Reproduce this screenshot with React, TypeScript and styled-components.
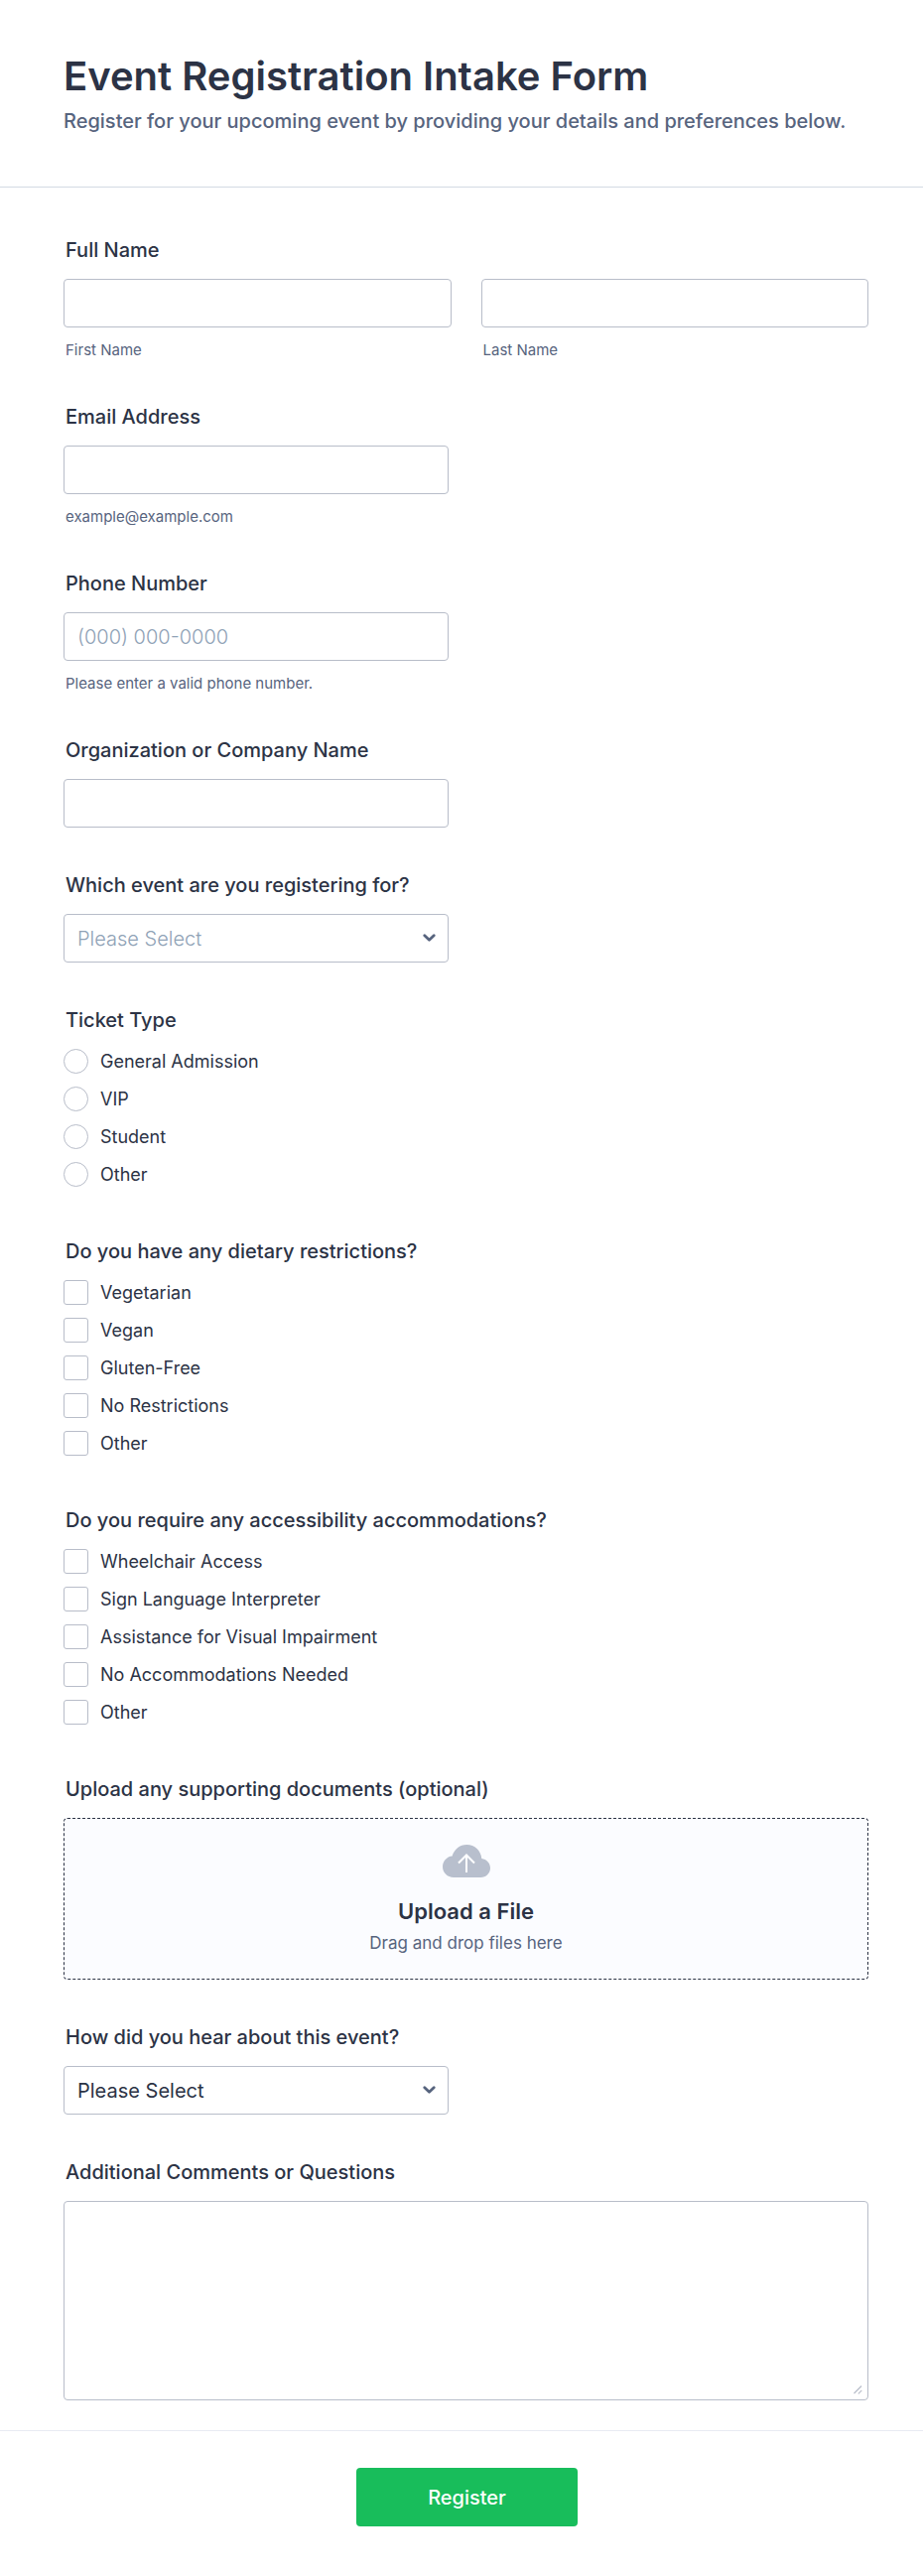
import React, { useId, useState } from "react";
import styled, { createGlobalStyle } from "styled-components";

const color = {
  ink: "#2c3345",
  muted: "#57647e",
  placeholder: "#8fa2b6",
  border: "#b8bdc9",
  green: "#18bd5b",
};

const GlobalStyle = createGlobalStyle`
  *, *::before, *::after { box-sizing: border-box; }
  body {
    margin: 0;
    background: #fff;
    color: ${color.ink};
    font-family: Inter, "Liberation Sans", sans-serif;
  }
  input, select, textarea, button { font: inherit; color: inherit; }
`;

const Form = styled.form`
  width: 100%;
`;

const Header = styled.header`
  padding: 52px 64px 54px;
  border-bottom: 1px solid #d3dae3;
`;

const Title = styled.h1`
  margin: 0;
  font-size: 40px;
  line-height: 50px;
  font-weight: 600;
`;

const Subtitle = styled.p`
  margin: 8px 0 0;
  font-size: 20px;
  line-height: 24px;
  font-weight: 500;
  color: ${color.muted};
`;

const Fields = styled.div`
  display: flex;
  flex-direction: column;
  gap: 45px;
  padding: 50px 55px 30px 64px;
`;

const FieldBox = styled.div`
  display: flex;
  flex-direction: column;
`;

const GroupBox = styled.fieldset`
  min-width: 0;
  margin: 0;
  padding: 0;
  border: 0;
`;

const Label = styled.label`
  display: block;
  margin-bottom: 16px;
  padding: 0 2px;
  font-size: 20px;
  line-height: 26px;
  font-weight: 500;
`;

const SubLabel = styled.label`
  margin-top: 14px;
  padding: 0 2px;
  font-size: 15px;
  line-height: 18px;
  color: ${color.muted};
`;

const Columns = styled.div`
  display: grid;
  grid-template-columns: 1fr 1fr;
  gap: 30px;
`;

const TextInput = styled.input<{ $half?: boolean }>`
  width: 100%;
  max-width: ${(p) => (p.$half ? "388px" : "none")};
  height: 49px;
  padding: 0 13px;
  border: 1px solid ${color.border};
  border-radius: 4px;
  background: #fff;
  font-size: 20px;
  &::placeholder {
    color: ${color.placeholder};
    font-weight: 300;
    opacity: 1;
  }
`;

const SelectBox = styled.div`
  display: grid;
  align-items: center;
  width: 100%;
  max-width: 388px;
  > * { grid-area: 1 / 1; }
  > svg {
    justify-self: end;
    margin-right: 13px;
    pointer-events: none;
  }
`;

const Select = styled.select<{ $muted?: boolean }>`
  appearance: none;
  width: 100%;
  height: 49px;
  padding: 0 40px 0 13px;
  border: 1px solid ${color.border};
  border-radius: 4px;
  background: #fff;
  font-size: 20px;
  font-weight: ${(p) => (p.$muted ? 300 : 400)};
  color: ${(p) => (p.$muted ? color.placeholder : color.ink)};
`;

const Options = styled.div`
  display: flex;
  flex-direction: column;
  align-items: flex-start;
  gap: 13px;
  padding-bottom: 7px;
`;

const Option = styled.label`
  display: flex;
  align-items: center;
  gap: 12px;
  font-size: 18px;
  line-height: 25px;
`;

const Tick = styled.input`
  appearance: none;
  width: 25px;
  height: 25px;
  margin: 0;
  border: 1px solid ${color.border};
  border-radius: ${(p) => (p.type === "radio" ? "50%" : "3px")};
  background: #fff;
  &:checked {
    background: ${color.green};
    box-shadow: inset 0 0 0 5px #fff;
  }
`;

const Upload = styled.button`
  display: flex;
  flex-direction: column;
  align-items: center;
  width: 100%;
  padding: 26px 16px 25px;
  border: 1px dashed ${color.ink};
  border-radius: 4px;
  background: #fbfcff;
  cursor: pointer;
`;

const UploadTitle = styled.span`
  margin-top: 21px;
  font-size: 22px;
  line-height: 26px;
  font-weight: 600;
`;

const UploadHint = styled.span`
  margin-top: 8px;
  font-size: 17px;
  line-height: 22px;
  color: ${color.muted};
`;

const CommentsBox = styled.div`
  display: grid;
  > * { grid-area: 1 / 1; }
  > svg {
    place-self: end;
    margin: 0 6px 6px 0;
    pointer-events: none;
  }
`;

const Comments = styled.textarea`
  display: block;
  width: 100%;
  height: 201px;
  padding: 8px 13px;
  border: 1px solid ${color.border};
  border-radius: 4px;
  background: #fff;
  font-size: 20px;
  resize: vertical;
  &::-webkit-resizer { background: transparent; }
`;

const Footer = styled.footer`
  display: flex;
  justify-content: center;
  padding: 37px 53px 50px 64px;
  border-top: 1px solid #e8ebf2;
`;

const Submit = styled.button`
  min-width: 223px;
  height: 59px;
  padding: 0 32px;
  border: 0;
  border-radius: 4px;
  background: ${color.green};
  color: #fff;
  font-size: 20px;
  font-weight: 500;
  cursor: pointer;
`;

function TextField(props: { label: string; type?: string; hint?: string; placeholder?: string }) {
  const id = useId();
  return (
    <FieldBox>
      <Label htmlFor={id}>{props.label}</Label>
      <TextInput $half id={id} type={props.type ?? "text"} placeholder={props.placeholder} />
      {props.hint && <SubLabel htmlFor={id}>{props.hint}</SubLabel>}
    </FieldBox>
  );
}

function SelectField(props: { label: string; muted?: boolean }) {
  const id = useId();
  return (
    <FieldBox>
      <Label htmlFor={id}>{props.label}</Label>
      <SelectBox>
        <Select id={id} $muted={props.muted}>
          <option>Please Select</option>
        </Select>
        <svg width="13" height="9" viewBox="0 0 13 9" fill="none" aria-hidden="true">
          <path
            d="M1.8 1.8 6.5 6.3 11.2 1.8"
            stroke={color.muted}
            strokeWidth="2.8"
            strokeLinecap="round"
            strokeLinejoin="round"
          />
        </svg>
      </SelectBox>
    </FieldBox>
  );
}

function ChoiceField(props: { label: string; type: "radio" | "checkbox"; options: string[] }) {
  const name = useId();
  return (
    <GroupBox>
      <Label as="legend">{props.label}</Label>
      <Options>
        {props.options.map((option) => (
          <Option key={option}>
            <Tick type={props.type} name={name} value={option} />
            {option}
          </Option>
        ))}
      </Options>
    </GroupBox>
  );
}

function CloudIcon() {
  return (
    <svg width="48" height="33" viewBox="0 0 48 33" fill="none" aria-hidden="true">
      <path
        d="M11 33C4.900 33 0 28.300 0 22.300 0 16.600 4.200 12 9.600 11.500 11.500 4.800 17.200 0 24.300 0 32.400 0 38.600 6 39.300 14 44.300 14.600 48 18.600 48 23.500 48 28.800 43.700 33 38.400 33Z"
        fill="#b8bfcd"
      />
      <path d="M24 28V11M16 18.500 24 10.500 32 18.500" stroke="#fff" strokeWidth="2" />
    </svg>
  );
}

function ResizeGrip() {
  return (
    <svg width="9" height="9" viewBox="0 0 9 9" fill="none" aria-hidden="true">
      <path d="M.5 8 8 .5M4.800 8.300 8.300 4.800" stroke={color.border} strokeWidth="1.2" />
    </svg>
  );
}

export default function App() {
  const [, setSent] = useState(false);
  return (
    <>
      <GlobalStyle />
      <Form
        onSubmit={(e) => {
          e.preventDefault();
          setSent(true);
        }}
      >
        <Header>
          <Title>Event Registration Intake Form</Title>
          <Subtitle>
            Register for your upcoming event by providing your details and preferences below.
          </Subtitle>
        </Header>
        <Fields>
          <GroupBox>
            <Label as="legend">Full Name</Label>
            <Columns>
              <FieldBox>
                <TextInput id="first-name" type="text" />
                <SubLabel htmlFor="first-name">First Name</SubLabel>
              </FieldBox>
              <FieldBox>
                <TextInput id="last-name" type="text" />
                <SubLabel htmlFor="last-name">Last Name</SubLabel>
              </FieldBox>
            </Columns>
          </GroupBox>
          <TextField label="Email Address" type="email" hint="example@example.com" />
          <TextField
            label="Phone Number"
            type="tel"
            placeholder="(000) 000-0000"
            hint="Please enter a valid phone number."
          />
          <TextField label="Organization or Company Name" />
          <SelectField label="Which event are you registering for?" muted />
          <ChoiceField
            label="Ticket Type"
            type="radio"
            options={["General Admission", "VIP", "Student", "Other"]}
          />
          <ChoiceField
            label="Do you have any dietary restrictions?"
            type="checkbox"
            options={["Vegetarian", "Vegan", "Gluten-Free", "No Restrictions", "Other"]}
          />
          <ChoiceField
            label="Do you require any accessibility accommodations?"
            type="checkbox"
            options={[
              "Wheelchair Access",
              "Sign Language Interpreter",
              "Assistance for Visual Impairment",
              "No Accommodations Needed",
              "Other",
            ]}
          />
          <FieldBox>
            <Label htmlFor="upload">Upload any supporting documents (optional)</Label>
            <Upload id="upload" type="button">
              <CloudIcon />
              <UploadTitle>Upload a File</UploadTitle>
              <UploadHint>Drag and drop files here</UploadHint>
            </Upload>
          </FieldBox>
          <SelectField label="How did you hear about this event?" />
          <FieldBox>
            <Label htmlFor="comments">Additional Comments or Questions</Label>
            <CommentsBox>
              <Comments id="comments" />
              <ResizeGrip />
            </CommentsBox>
          </FieldBox>
        </Fields>
        <Footer>
          <Submit type="submit">Register</Submit>
        </Footer>
      </Form>
    </>
  );
}
